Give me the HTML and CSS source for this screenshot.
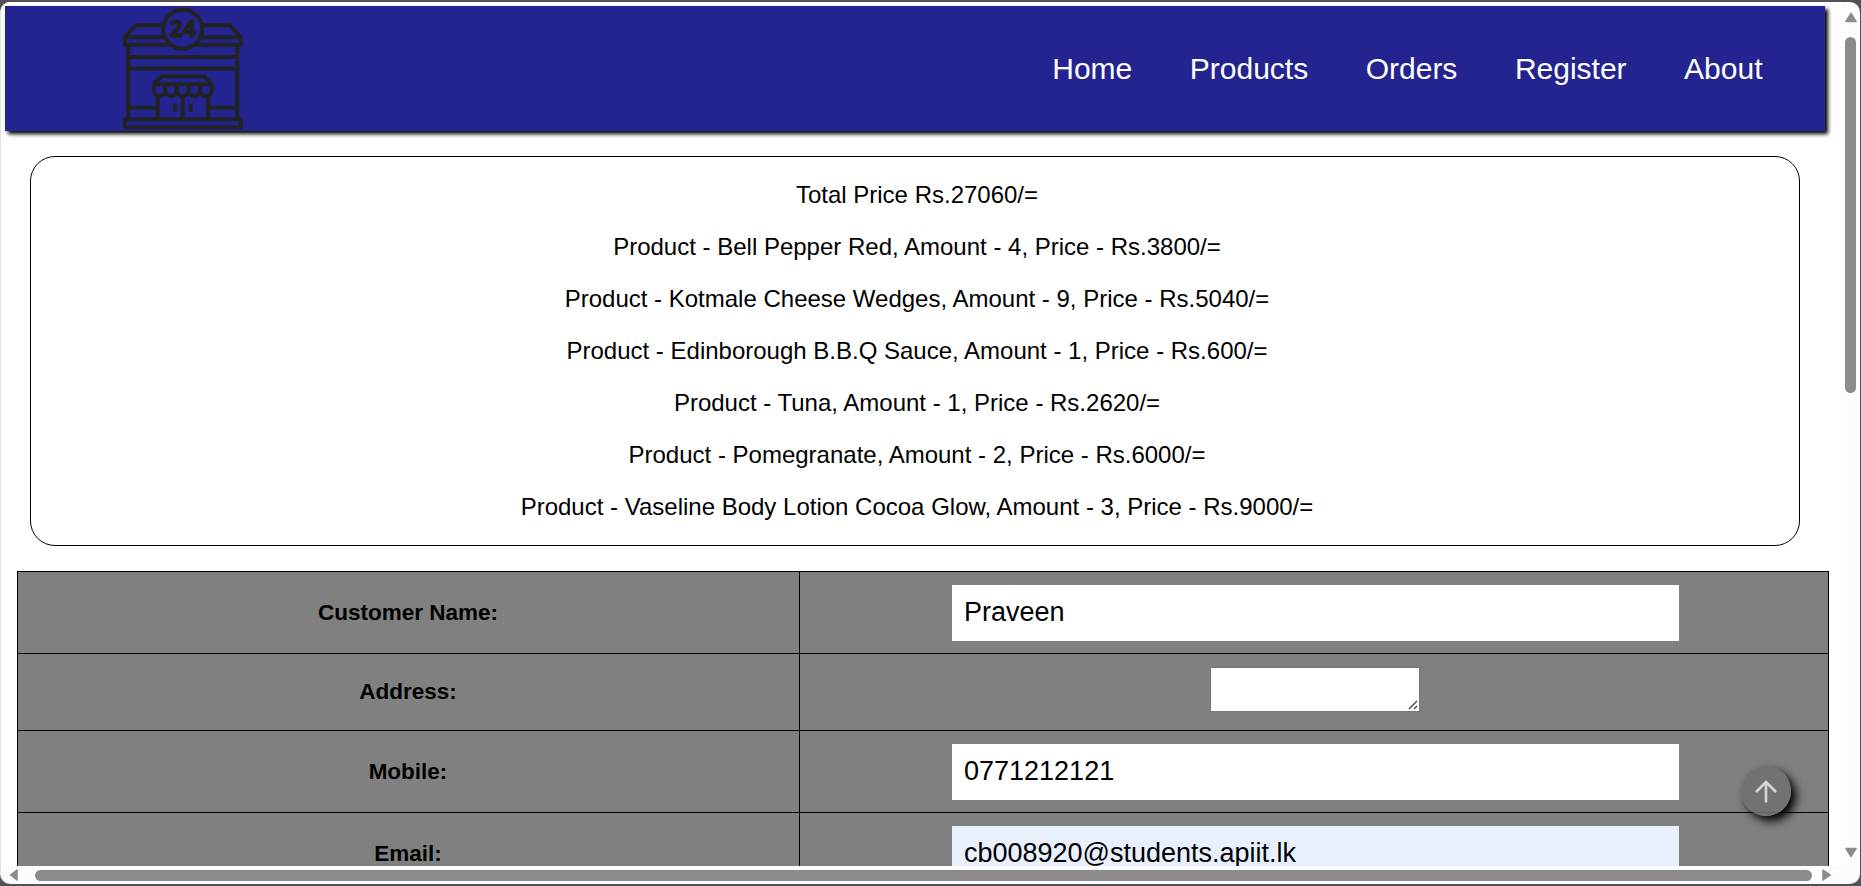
FILE: index.html
```
<!DOCTYPE html>
<html lang="en">
<head>
<meta charset="utf-8">
<title>Checkout</title>
<link rel="stylesheet" href="styles.css">
</head>
<body>
<div class="window">
  <div class="viewport">
    <header class="navbar">
      <svg class="logo" viewBox="-0.700 0.800 122 122" fill="none" stroke="#222" stroke-width="4" stroke-linejoin="round">
        <path d="M3 30 14 18H42M80 18H108L119 30"/>
        <path d="M45 30H3V37.500H50M77 30H119V37.500H72"/>
        <path d="M6.500 38V110M115.500 38V110M6.500 49.800H115.500M6.500 61.200H115.500"/>
        <path d="M8 100.500H35M88 100.500H114"/>
        <path d="M3 112H119V120H3Z"/>
        <circle cx="61" cy="22" r="19.500"/>
        <path d="M32 77 40 69H82L90 77V84M32 77H90M32 77V84M43.500 77V84M55 77V84M67 77V84M78.500 77V84"/>
        <path d="M32 83a5.800 5.800 0 0 0 11.600 0a5.800 5.800 0 0 0 11.600 0a5.800 5.800 0 0 0 11.600 0a5.800 5.800 0 0 0 11.600 0a5.800 5.800 0 0 0 11.600 0"/>
        <path d="M36 88V111M86.500 88V111M61 88V111M53.500 96.500V104.500M69 96.500V104.500"/>
        <text class="logo-text" x="61" y="29.800" text-anchor="middle">24</text>
      </svg>
      <nav class="links"><a>Home</a><a>Products</a><a>Orders</a><a>Register</a><a>About</a></nav>
    </header>
    <section class="summary">
      <p>Total Price Rs.27060/=</p>
      <p>Product - Bell Pepper Red, Amount - 4, Price - Rs.3800/=</p>
      <p>Product - Kotmale Cheese Wedges, Amount - 9, Price - Rs.5040/=</p>
      <p>Product - Edinborough B.B.Q Sauce, Amount - 1, Price - Rs.600/=</p>
      <p>Product - Tuna, Amount - 1, Price - Rs.2620/=</p>
      <p>Product - Pomegranate, Amount - 2, Price - Rs.6000/=</p>
      <p>Product - Vaseline Body Lotion Cocoa Glow, Amount - 3, Price - Rs.9000/=</p>
    </section>
    <div class="form">
      <div class="row"><div class="label">Customer Name:</div><div class="cell"><div class="field">Praveen</div></div></div>
      <div class="row short"><div class="label">Address:</div><div class="cell"><div class="area"><svg class="grip" viewBox="0 0 10 10" stroke="#55555c" stroke-width="1.600"><path d="M1 9 9 1M6 9 9 6"/></svg></div></div></div>
      <div class="row"><div class="label">Mobile:</div><div class="cell"><div class="field">0771212121</div></div></div>
      <div class="row"><div class="label">Email:</div><div class="cell"><div class="field filled">cb008920@students.apiit.lk</div></div></div>
    </div>
  </div>
  <div class="vbar">
    <svg width="14" height="11" viewBox="0 0 14 11"><path d="M7 1.500 12 9.500H2Z"/></svg>
    <div class="vthumb"></div>
    <svg width="14" height="11" viewBox="0 0 14 11"><path d="M7 9.500 12 1.500H2Z"/></svg>
  </div>
  <div class="hbar">
    <svg width="10" height="14" viewBox="0 0 10 14"><path d="M1.500 7 8 2V12Z"/></svg>
    <div class="hthumb"></div>
    <svg width="10" height="14" viewBox="0 0 10 14"><path d="M8.500 7 1 2V12Z"/></svg>
  </div>
  <div class="to-top"><svg width="24" height="24" viewBox="0 0 24 24" fill="none" stroke="#d6d6d8" stroke-width="2.600"><path d="M12 23.500V3M2 13 12 3 22 13"/></svg></div>
</div>
</body>
</html>
```
FILE: styles.css
```
* { box-sizing: border-box; }
body {
  margin: 0;
  padding: 2px 1px 2px 0;
  height: 886px;
  background: #515156;
  overflow: hidden;
  font-family: "Liberation Sans", Arial, sans-serif;
  color: #000;
}
.window {
  position: relative;
  display: grid;
  grid-template: 864px 18px / 1840px 19px;
  height: 882px;
  width: 1860px;
  background: #fcfcfc;
  border-left: 1px solid #e2e2e2;
  border-radius: 10px;
  overflow: hidden;
}
.viewport { background: #fff; overflow: hidden; padding: 4px 0 0 4px; }
.navbar {
  display: flex;
  align-items: center;
  justify-content: space-between;
  width: 1820px;
  height: 125px;
  padding: 0 62.5px 0 116px;
  background: #242491;
  box-shadow: 3px 3px 4px #000;
}
.logo { width: 122px; height: 122px; }
.logo-text { font: bold 23px "Open Sans", sans-serif; fill: #222; stroke: #222; stroke-width: 1.2px; }
.links { display: flex; gap: 57.5px; font-size: 30px; line-height: 34px; color: #fff; }
.summary {
  width: 1770px;
  height: 390px;
  margin: 25px 0 0 25px;
  padding: 24px 0 0 4px;
  border: 1px solid #000;
  border-radius: 25px;
  text-align: center;
  font-size: 24px;
  line-height: 28px;
}
.summary p { margin: 0 0 24px; }
.form {
  width: 1812px;
  margin: 25px 0 0 12px;
  border: 1px solid #000;
  background: #808080;
}
.row {
  display: grid;
  grid-template-columns: 782px 1fr;
  height: 82px;
  border-bottom: 1px solid #000;
}
.row.short { height: 77px; }
.label {
  display: flex;
  align-items: center;
  justify-content: center;
  padding-right: 1px;
  border-right: 1px solid #000;
  font-size: 22.5px;
  font-weight: bold;
}
.cell { display: flex; justify-content: center; padding: 13px 0 0 2px; }
.field {
  width: 727px;
  height: 56px;
  padding: 0 12.5px;
  background: #fff;
  font-size: 27px;
  line-height: 54px;
}
.field.filled { background: #e8f0fe; }
.area {
  display: flex;
  align-items: flex-end;
  justify-content: flex-end;
  width: 210px;
  height: 45px;
  padding: 1px;
  background: #fff;
  border: 1px solid #767676;
}
.grip { width: 10px; height: 10px; }
.vbar { display: flex; flex-direction: column; align-items: center; padding: 10px 0 8px; }
.vbar svg, .hbar svg { fill: #8b8b8b; stroke: #8b8b8b; stroke-width: 1.5; stroke-linejoin: round; flex: none; }
.vthumb { width: 11px; height: 356px; margin: 14px 0 auto; border-radius: 6px; background: #8b8b8b; }
.hbar { grid-column: 1 / 3; display: flex; align-items: center; padding: 0 28px 0 8px; }
.hthumb { width: 1777px; height: 11px; margin: 0 auto 0 16px; border-radius: 6px; background: #8b8b8b; }
.to-top {
  position: absolute;
  left: 1740px;
  top: 764px;
  display: flex;
  align-items: center;
  justify-content: center;
  width: 50px;
  height: 50px;
  border-radius: 50%;
  background: rgba(112, 112, 112, .9);
  box-shadow: 5px 5px 10px #000;
}
```
